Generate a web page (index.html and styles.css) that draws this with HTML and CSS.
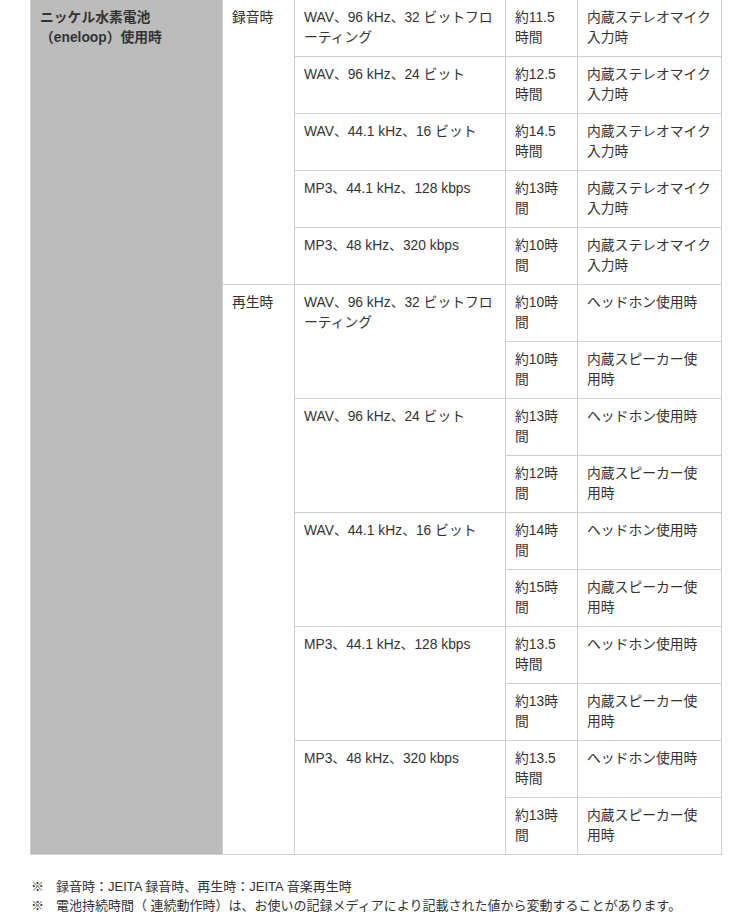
FILE: index.html
```html
<!DOCTYPE html>
<html lang="ja">
<head>
<meta charset="utf-8">
<link rel="stylesheet" href="styles.css">
</head>
<body>
<div class="page">
<table class="spec">
<colgroup>
<col class="c1"><col class="c2"><col class="c3"><col class="c4"><col class="c5">
</colgroup>
<tbody>
<tr>
<th rowspan="15" class="head">ニッケル水素電池（eneloop）使用時</th>
<td rowspan="5">録音時</td>
<td>WAV、96 kHz、32 ビットフローティング</td>
<td>約11.5時間</td>
<td>内蔵ステレオマイク入力時</td>
</tr>
<tr>
<td>WAV、96 kHz、24 ビット</td>
<td>約12.5時間</td>
<td>内蔵ステレオマイク入力時</td>
</tr>
<tr>
<td>WAV、44.1 kHz、16 ビット</td>
<td>約14.5時間</td>
<td>内蔵ステレオマイク入力時</td>
</tr>
<tr>
<td>MP3、44.1 kHz、128 kbps</td>
<td>約13時間</td>
<td>内蔵ステレオマイク入力時</td>
</tr>
<tr>
<td>MP3、48 kHz、320 kbps</td>
<td>約10時間</td>
<td>内蔵ステレオマイク入力時</td>
</tr>
<tr>
<td rowspan="10">再生時</td>
<td rowspan="2">WAV、96 kHz、32 ビットフローティング</td>
<td>約10時間</td>
<td>ヘッドホン使用時</td>
</tr>
<tr>
<td>約10時間</td>
<td>内蔵スピーカー使<br>用時</td>
</tr>
<tr>
<td rowspan="2">WAV、96 kHz、24 ビット</td>
<td>約13時間</td>
<td>ヘッドホン使用時</td>
</tr>
<tr>
<td>約12時間</td>
<td>内蔵スピーカー使<br>用時</td>
</tr>
<tr>
<td rowspan="2">WAV、44.1 kHz、16 ビット</td>
<td>約14時間</td>
<td>ヘッドホン使用時</td>
</tr>
<tr>
<td>約15時間</td>
<td>内蔵スピーカー使<br>用時</td>
</tr>
<tr>
<td rowspan="2">MP3、44.1 kHz、128 kbps</td>
<td>約13.5時間</td>
<td>ヘッドホン使用時</td>
</tr>
<tr>
<td>約13時間</td>
<td>内蔵スピーカー使<br>用時</td>
</tr>
<tr>
<td rowspan="2">MP3、48 kHz、320 kbps</td>
<td>約13.5時間</td>
<td>ヘッドホン使用時</td>
</tr>
<tr>
<td>約13時間</td>
<td>内蔵スピーカー使<br>用時</td>
</tr>
</tbody>
</table>
<ul class="notes">
<li><span class="mark">※</span><span>録音時：JEITA 録音時、再生時：JEITA 音楽再生時</span></li>
<li><span class="mark">※</span><span>電池持続時間（ 連続動作時）は、お使いの記録メディアにより記載された値から変動することがあります。</span></li>
</ul>
</div>
</body>
</html>
```

FILE: styles.css
```css
html, body {
  margin: 0;
  padding: 0;
  background: #fff;
}
body {
  font-family: "Liberation Sans", "Noto Sans CJK JP", sans-serif;
  color: #333;
}
.page {
  padding: 0 0 0 30px;
}
.spec {
  margin-top: -1px;
  width: 691px;
  table-layout: fixed;
  border-collapse: collapse;
  font-size: 13.8px;
  line-height: 20px;
}
.c1 { width: 192px; }
.c2 { width: 72px; }
.c3 { width: 211px; }
.c4 { width: 72px; }
.c5 { width: 144px; }
.spec th,
.spec td {
  border: 1px solid #d0d0d0;
  padding: 8px 9px;
  vertical-align: top;
  text-align: left;
}
.spec th.head {
  background: #bcbcbc;
  font-weight: bold;
  color: #333;
}
.notes {
  list-style: none;
  margin: 22px 0 0;
  padding: 0;
  font-size: 13px;
  line-height: 19px;
  color: #333;
}
.notes li {
  display: flex;
}
.notes .mark {
  width: 25px;
  flex: none;
  padding-left: 1px;
}
```
